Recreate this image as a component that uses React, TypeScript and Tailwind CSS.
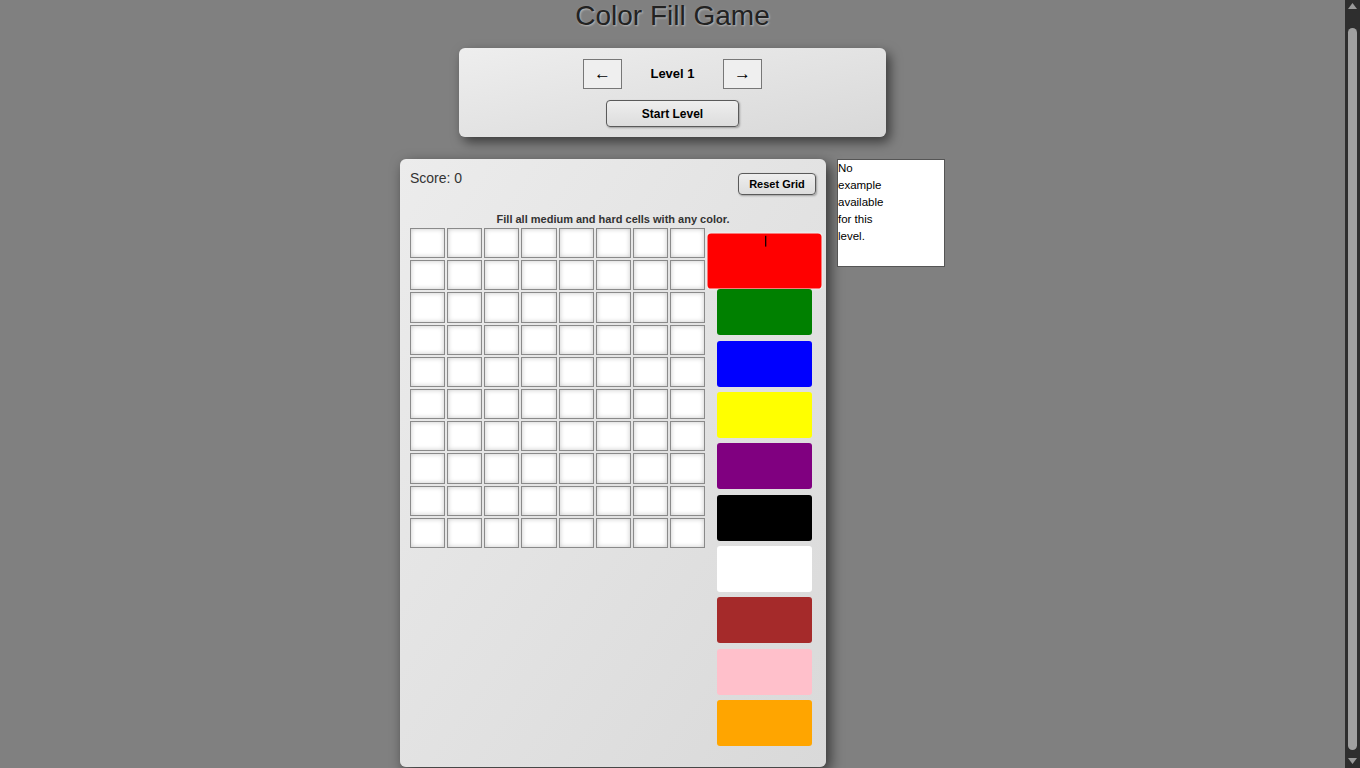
import React, { useEffect, useState } from 'react';

const COLORS = [
  '#ff0000',
  '#008000',
  '#0000ff',
  '#ffff00',
  '#800080',
  '#000000',
  '#ffffff',
  '#a52a2a',
  '#ffc0cb',
  '#ffa500',
];

const ROWS = 10;
const COLS = 8;

export default function App() {
  const [level, setLevel] = useState(1);
  const [selected, setSelected] = useState(0);
  const [grid, setGrid] = useState<(string | null)[]>(
    Array(ROWS * COLS).fill(null)
  );

  useEffect(() => {
    // dark scrollbar like the original page
    document.documentElement.classList.add('[color-scheme:dark]');
  }, []);

  function fillCell(i: number) {
    setGrid(g => g.map((c, idx) => (idx === i ? COLORS[selected] : c)));
  }

  return (
    <div className="min-h-screen bg-[#808080] font-['Liberation_Sans',Arial,sans-serif] text-[#222]">
      <div className="mr-[15px] pb-[19px]">
        <h1 className="text-center text-[28px] leading-8 text-[#222] [text-shadow:1px_1px_2px_rgba(255,255,255,0.45)]">
          Color Fill Game
        </h1>

        {/* Level controls */}
        <div className="mx-auto mt-4 w-[427px] rounded-md bg-linear-to-br from-[#eeeeee] to-[#d8d8d8] pt-[11px] pb-[10px] shadow-[4px_5px_12px_rgba(0,0,0,0.55)]">
          <div className="flex items-center justify-center">
            <button
              onClick={() => setLevel(l => Math.max(1, l - 1))}
              className="flex h-[30px] w-[39px] items-center justify-center border border-[#777] bg-[#efefef] text-[17px] text-black"
            >
              ←
            </button>
            <span className="w-[101px] text-center text-[13px] font-bold text-black">
              Level {level}
            </span>
            <button
              onClick={() => setLevel(l => l + 1)}
              className="flex h-[30px] w-[39px] items-center justify-center border border-[#777] bg-[#efefef] text-[17px] text-black"
            >
              →
            </button>
          </div>
          <div className="mt-[11px] flex justify-center">
            <button className="h-[27px] w-[133px] rounded-[4px] border border-[#5a5a5a] bg-linear-to-b from-[#eeeeee] to-[#dddddd] text-[12px] font-bold text-black shadow-[1px_1px_2px_rgba(0,0,0,0.3)]">
              Start Level
            </button>
          </div>
        </div>

        {/* Game area */}
        <div className="mt-[22px] flex items-start justify-center gap-[11px]">
          <div className="w-[426px] rounded-md bg-linear-to-br from-[#ececec] to-[#d9d9d9] px-[10px] pt-[10px] pb-[21px] shadow-[4px_5px_14px_rgba(0,0,0,0.6)]">
            <div className="flex items-start justify-between">
              <span className="text-[14px] leading-[18px] text-[#333]">Score: 0</span>
              <button
                onClick={() => setGrid(Array(ROWS * COLS).fill(null))}
                className="mt-[4px] h-[22px] w-[78px] rounded-[4px] border border-[#5a5a5a] bg-linear-to-b from-[#eeeeee] to-[#dddddd] text-[11px] font-bold text-black shadow-[1px_1px_2px_rgba(0,0,0,0.3)]"
              >
                Reset Grid
              </button>
            </div>

            <p className="mt-[17px] text-center text-[11px] leading-[14px] font-bold text-[#333]">
              Fill all medium and hard cells with any color.
            </p>

            <div className="mt-[2px] flex items-start gap-[12px]">
              <div className="grid h-[320px] w-[295px] grid-cols-8 grid-rows-10 gap-x-[2px] gap-y-[2px]">
                {grid.map((c, i) => (
                  <div
                    key={i}
                    onClick={() => fillCell(i)}
                    className="border border-[#8a8a8a] bg-white shadow-[inset_0_0_5px_rgba(0,0,0,0.22)]"
                    style={c ? { backgroundColor: c } : undefined}
                  />
                ))}
              </div>

              <div className="flex w-[95px] flex-col gap-[5.33px] pt-[10px]">
                {COLORS.map((c, i) => (
                  <div
                    key={c}
                    onClick={() => setSelected(i)}
                    className={
                      i === selected
                        ? 'relative h-[46px] scale-[1.2] rounded-[3px] shadow-[0_0_2px_rgba(255,255,255,0.8)]'
                        : 'relative h-[46px] rounded-[3px]'
                    }
                    style={{ backgroundColor: c }}
                  >
                    {i === selected && (
                      <span className="absolute top-[2px] left-1/2 h-[9px] w-px bg-black" />
                    )}
                  </div>
                ))}
              </div>
            </div>
          </div>

          <div className="h-[108px] w-[108px] border border-[#555] bg-white text-[11.5px] leading-[17px] text-black">
            <span className="block">No</span>
            <span className="block">example</span>
            <span className="block">available</span>
            <span className="block">for this</span>
            <span className="block">level.</span>
          </div>
        </div>
      </div>

      {/* scrollbar as in the screenshot */}
      <div className="fixed top-0 right-0 flex h-screen w-[15px] flex-col items-center bg-[#2e2e2e]">
        <svg width="9" height="6" viewBox="0 0 9 6" className="mt-[3px]">
          <path d="M0 6 L4.5 0 L9 6 Z" fill="#9a9a9a" />
        </svg>
        <div className="mt-[19px] w-[9px] flex-1 rounded-full bg-[#a0a0a0]" />
        <svg width="9" height="6" viewBox="0 0 9 6" className="mt-[8px] mb-[4px]">
          <path d="M0 0 L9 0 L4.5 6 Z" fill="#9a9a9a" />
        </svg>
      </div>
    </div>
  );
}
